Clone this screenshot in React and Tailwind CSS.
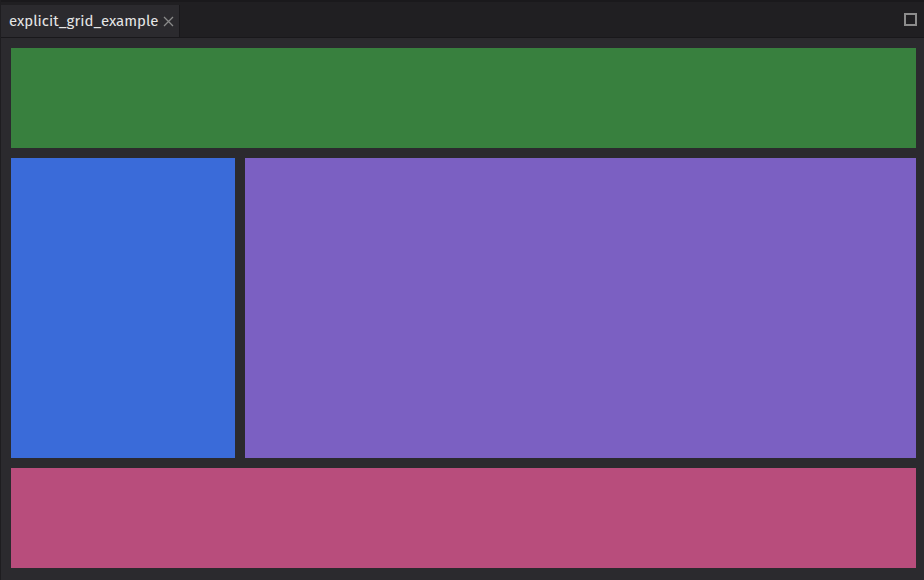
export default function App() {
  return (
    <div className="w-[924px] h-[580px] flex flex-col bg-[#2b2a2e] border-l border-[#1e1d20] overflow-hidden" style={{ fontFamily: '"Fira Sans", "Noto Sans", "Open Sans", sans-serif' }}>
      <div className="h-[38px] flex items-stretch bg-[#201f22] border-b border-[#19181b] pt-[3px] border-t-[2px] border-t-[#1a191c]">
        <div className="w-[179px] flex items-center gap-[5px] pl-[8px] bg-[#2b2a2e] border-r border-[#19181b]">
          <span className="text-[15px] text-[#e6e6e6] leading-none">explicit_grid_example</span>
          <svg width="11" height="11" viewBox="0 0 11 11" className="mt-[1px]">
            <path d="M1 1L10 10M10 1L1 10" stroke="#8a8a8a" strokeWidth="1.3" />
          </svg>
        </div>
        <div className="flex-1" />
        <div className="flex items-center pr-[7px]">
          <div className="w-[13px] h-[13px] border-2 border-[#8c8c8c] mb-[3px]" />
        </div>
      </div>
      <div className="flex-1 flex flex-col gap-[10px] pt-[10px] pl-[10px] pr-[8px] pb-[12px]">
        <div className="h-[100px] bg-[#38803e]" />
        <div className="h-[300px] flex gap-[10px]">
          <div className="w-[224px] bg-[#3a6bd9]" />
          <div className="flex-1 bg-[#7b60c2]" />
        </div>
        <div className="h-[100px] bg-[#b84d7c]" />
      </div>
    </div>
  );
}
